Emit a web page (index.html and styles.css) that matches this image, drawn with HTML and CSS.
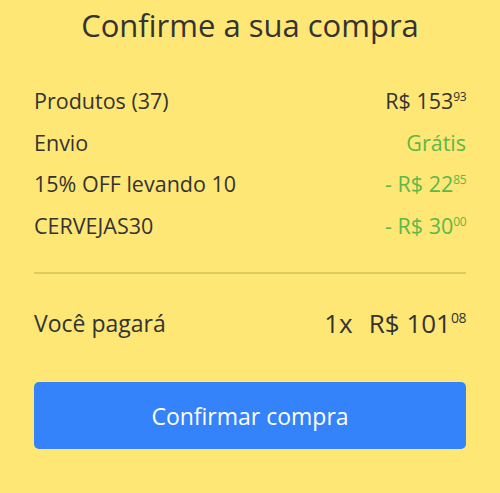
FILE: index.html
```html
<!DOCTYPE html>
<html lang="pt-BR">

<head>
    <meta charset="UTF-8">
    <meta name="viewport" content="width=device-width, initial-scale=1.0">
    <title>Confirme a sua compra</title>
    <link rel="stylesheet" href="styles.css">
</head>

<body>
    <h1 class="title">Confirme a sua compra</h1>

    <div class="summary">
        <div class="row">
            <span>Produtos (37)</span>
            <span class="price">R$ 153<sup>93</sup></span>
        </div>
        <div class="row">
            <span>Envio</span>
            <span class="price discount">Grátis</span>
        </div>
        <div class="row">
            <span>15% OFF levando 10</span>
            <span class="price discount">- R$ 22<sup>85</sup></span>
        </div>
        <div class="row">
            <span>CERVEJAS30</span>
            <span class="price discount">- R$ 30<sup>00</sup></span>
        </div>
    </div>

    <div class="total">
        <span>Você pagará</span>
        <span class="total-price"><span class="installments">1x</span>R$ 101<sup>08</sup></span>
    </div>

    <button class="confirm">Confirmar compra</button>
</body>

</html>
```

FILE: styles.css
```css
body {
    margin: 0;
    padding: 0 34px;
    background-color: #ffe775;
    color: #333333;
    font-family: "Open Sans", sans-serif;
}

.title {
    margin: 0;
    padding-top: 4px;
    font-size: 31px;
    font-weight: 400;
    text-align: center;
    line-height: 42px;
}

.summary {
    margin-top: 34px;
    padding-bottom: 26px;
    border-bottom: 2px solid #dccb5e;
}

.row {
    display: flex;
    justify-content: space-between;
    align-items: center;
    height: 41.5px;
    font-size: 21.5px;
}

.price {
    color: #333333;
}

.discount {
    color: #5cb84a;
}

sup {
    font-size: 12px;
    vertical-align: 8px;
    line-height: 0;
    letter-spacing: -0.5px;
}

.total {
    display: flex;
    justify-content: space-between;
    align-items: center;
    height: 98px;
    font-size: 23px;
}

.total-price {
    font-size: 26px;
}

.total-price sup {
    font-size: 14px;
    vertical-align: 10px;
}

.installments {
    margin-right: 16px;
}

.confirm {
    display: block;
    width: 100%;
    height: 67px;
    margin-top: 10px;
    border: none;
    border-radius: 5px;
    background-color: #3483fa;
    color: white;
    font-family: "Open Sans", sans-serif;
    font-size: 23px;
}
```
